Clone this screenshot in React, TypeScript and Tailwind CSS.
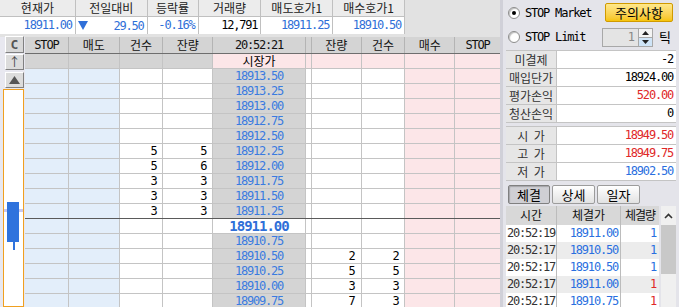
import React from 'react';

const mono = "font-['DejaVu_Sans_Mono','Noto_Sans_CJK_KR',monospace]";
const kr = "font-['Noto_Sans_CJK_KR','Noto_Sans',sans-serif]";
const num = 'tracking-[-1.2px]';

interface BookRowProps {
    price: string;
    lc?: string;
    lq?: string;
    rq?: string;
    rc?: string;
    current?: boolean;
    divider?: boolean;
}

const sellRows: BookRowProps[] = [
    { price: '18913.50' },
    { price: '18913.25' },
    { price: '18913.00' },
    { price: '18912.75' },
    { price: '18912.50' },
    { price: '18912.25', lc: '5', lq: '5' },
    { price: '18912.00', lc: '5', lq: '6' },
    { price: '18911.75', lc: '3', lq: '3' },
    { price: '18911.50', lc: '3', lq: '3' },
    { price: '18911.25', lc: '3', lq: '3', divider: true },
];

const buyRows: BookRowProps[] = [
    { price: '18911.00', current: true },
    { price: '18910.75' },
    { price: '18910.50', rq: '2', rc: '2' },
    { price: '18910.25', rq: '5', rc: '5' },
    { price: '18910.00', rq: '3', rc: '3' },
    { price: '18909.75', rq: '7', rc: '3' },
];

const trades = [
    { time: '20:52:19', price: '18911.00', qty: '1', up: false },
    { time: '20:52:17', price: '18910.50', qty: '1', up: false },
    { time: '20:52:17', price: '18910.50', qty: '1', up: false },
    { time: '20:52:17', price: '18911.00', qty: '1', up: true },
    { time: '20:52:17', price: '18910.75', qty: '1', up: true },
];

const BookRow = ({ price, lc, lq, rq, rc, current, divider }: BookRowProps) => {
    const line = divider ? 'border-b-[#5a5a5a]' : 'border-b-[#c4c4c4]';
    return (
        <div className={`flex h-[15px] shrink-0 border-b ${line} leading-[14px] ${mono} text-[12px]`}>
            <div className="w-[44px] border-r border-[#c4c4c4] bg-[#e3eefa]" />
            <div className="w-[51px] border-r border-[#c4c4c4] bg-[#e3eefa]" />
            <div className={`w-[44px] border-r border-[#c4c4c4] bg-white pr-[6px] text-right text-black ${num}`}>
                {lc}
            </div>
            <div className={`w-[50px] border-r border-[#c4c4c4] bg-white pr-[6px] text-right text-black ${num}`}>
                {lq}
            </div>
            {current ? (
                <div className="w-[93px] border-r border-[#c4c4c4] bg-white text-center text-[14px] font-bold tracking-[-1px] text-[#2f6fd8]">
                    {price}
                </div>
            ) : (
                <div className={`w-[93px] border-r border-[#c4c4c4] bg-[#d4d4d4] text-center text-[#3a7be0] ${num}`}>
                    {price}
                </div>
            )}
            <div className="w-[6px] border-r border-[#c4c4c4] bg-white" />
            <div className={`w-[50px] border-r border-[#c4c4c4] bg-white pr-[6px] text-right text-black ${num}`}>
                {rq}
            </div>
            <div className={`w-[44px] border-r border-[#c4c4c4] bg-white pr-[6px] text-right text-black ${num}`}>
                {rc}
            </div>
            <div className="w-[50px] border-r border-[#c4c4c4] bg-[#fce6e8]" />
            <div className="w-[45px] bg-[#fce6e8]" />
        </div>
    );
};

const Radio = ({ checked }: { checked?: boolean }) => (
    <span className="flex h-[12px] w-[12px] items-center justify-center rounded-full border border-[#8c8c8c] bg-white shadow-[inset_1px_1px_1px_rgba(0,0,0,0.25)]">
        {checked && <span className="h-[4px] w-[4px] rounded-full bg-black" />}
    </span>
);

const InfoRow = ({ label, value, color }: { label: string; value: string; color: string }) => (
    <div className="flex h-[18px] border-b border-[#c4c4c4]">
        <div className={`w-[51px] whitespace-pre border-r border-[#c4c4c4] bg-[#e6e6e6] text-center text-[12px] leading-[17px] text-[#333] ${kr}`}>
            {label}
        </div>
        <div className={`flex-1 bg-white pr-[3px] text-right text-[12px] leading-[17px] ${mono} ${num} ${color}`}>
            {value}
        </div>
    </div>
);

const App = () => {
    return (
        <div className={`flex h-[307px] w-[679px] overflow-hidden bg-[#e4e4ea] ${kr}`}>
            {/* left: quote + order book */}
            <div className="flex w-[503px] flex-col border-r-[3px] border-[#d0d0d8]">
                <div className="flex h-[37px] shrink-0 bg-[#e2e2e2]">
                    <div className="flex h-[34px] w-[405px] flex-col border-r border-[#c0c0c0]">
                        <div className="flex h-[17px] border-b border-[#c0c0c0] bg-[#ececec] text-center text-[12px] leading-[16px] text-[#222]">
                            <div className="w-[76px] border-r border-[#c0c0c0]">현재가</div>
                            <div className="w-[72px] border-r border-[#c0c0c0]">전일대비</div>
                            <div className="w-[51px] border-r border-[#c0c0c0]">등락률</div>
                            <div className="w-[63px] border-r border-[#c0c0c0]">거래량</div>
                            <div className="w-[72px] border-r border-[#c0c0c0]">매도호가1</div>
                            <div className="w-[71px]">매수호가1</div>
                        </div>
                        <div className={`flex h-[17px] bg-white text-right text-[12px] leading-[16px] ${mono} ${num}`}>
                            <div className="w-[76px] border-r border-[#c0c0c0] pr-[3px] text-[#2f6fd8]">18911.00</div>
                            <div className="flex w-[72px] items-center justify-between border-r border-[#c0c0c0] pr-[3px] pl-[2px] text-[#2f6fd8]">
                                <svg width="10" height="9" viewBox="0 0 10 9">
                                    <polygon points="0,0 10,0 5,9" fill="#2f6fd8" />
                                </svg>
                                <span>29.50</span>
                            </div>
                            <div className="w-[51px] border-r border-[#c0c0c0] pr-[3px] text-[#2f6fd8]">-0.16%</div>
                            <div className="w-[63px] border-r border-[#c0c0c0] pr-[3px] text-black">12,791</div>
                            <div className="w-[72px] border-r border-[#c0c0c0] pr-[3px] text-[#2f6fd8]">18911.25</div>
                            <div className="w-[71px] pr-[3px] text-[#2f6fd8]">18910.50</div>
                        </div>
                    </div>
                </div>

                <div className="flex min-h-0 flex-1">
                    {/* side strip */}
                    <div className="flex w-[25px] flex-col items-end bg-[#e8e8f0] pr-[1px]">
                        <div className={`mt-[-1px] flex h-[17px] w-[19px] items-center justify-center border border-b-[#808080] border-r-[#808080] border-l-white border-t-white bg-[#d8d8d8] text-[13px] font-bold text-[#555] ${mono}`}>
                            C
                        </div>
                        <div className="mt-[1px] flex h-[16px] w-[19px] items-center justify-center border border-b-[#808080] border-r-[#808080] border-l-white border-t-white bg-[#dcdcdc] text-[12px] text-[#444]">
                            ↑
                        </div>
                        <div className="mt-[2px] flex h-[16px] w-[19px] items-center justify-center border border-b-[#808080] border-r-[#808080] border-l-white border-t-white bg-[#dcdcdc]">
                            <svg width="11" height="8" viewBox="0 0 11 8">
                                <polygon points="5.5,0 11,8 0,8" fill="#555" />
                            </svg>
                        </div>
                        <div className="mt-[1px] w-[21px] flex-1 border border-[#f0a020] bg-white">
                            <svg width="19" height="216" viewBox="0 0 19 216">
                                <rect x="0" y="119" width="19" height="3" fill="#c8c8f0" />
                                <rect x="9" y="140" width="2" height="20" fill="#2f73dd" />
                                <rect x="3" y="112" width="12" height="40" fill="#2f73dd" />
                            </svg>
                        </div>
                    </div>

                    {/* order book */}
                    <div className="flex w-[475px] flex-col bg-white">
                        <div className={`flex h-[17px] shrink-0 border-b border-b-[#6e6e6e] bg-[#d4d4d4] text-center text-[12px] leading-[16px] text-[#111]`}>
                            <div className={`w-[44px] border-r border-[#b4b4b4] ${mono} ${num}`}>STOP</div>
                            <div className="w-[51px] border-r border-[#b4b4b4]">매도</div>
                            <div className="w-[44px] border-r border-[#b4b4b4]">건수</div>
                            <div className="w-[50px] border-r border-[#b4b4b4]">잔량</div>
                            <div className={`w-[93px] border-r border-[#b4b4b4] ${mono} ${num}`}>20:52:21</div>
                            <div className="w-[6px] border-r border-[#b4b4b4]" />
                            <div className="w-[50px] border-r border-[#b4b4b4]">잔량</div>
                            <div className="w-[44px] border-r border-[#b4b4b4]">건수</div>
                            <div className="w-[50px] border-r border-[#b4b4b4]">매수</div>
                            <div className={`w-[45px] ${mono} ${num}`}>STOP</div>
                        </div>
                        <div className="flex h-[15px] shrink-0 border-b border-[#c4c4c4] text-[12px] leading-[14px]">
                            <div className="w-[44px] border-r border-[#c4c4c4] bg-[#d4d4d4]" />
                            <div className="w-[51px] border-r border-[#c4c4c4] bg-[#d4d4d4]" />
                            <div className="w-[44px] border-r border-[#c4c4c4] bg-[#d4d4d4]" />
                            <div className="w-[50px] border-r border-[#c4c4c4] bg-[#d4d4d4]" />
                            <div className="w-[93px] border-r border-[#c4c4c4] bg-[#fce6e8] text-center text-black">시장가</div>
                            <div className="w-[6px] border-r border-[#c4c4c4] bg-[#fce6e8]" />
                            <div className="w-[50px] border-r border-[#c4c4c4] bg-[#fce6e8]" />
                            <div className="w-[44px] border-r border-[#c4c4c4] bg-[#fce6e8]" />
                            <div className="w-[50px] border-r border-[#c4c4c4] bg-[#fce6e8]" />
                            <div className="w-[45px] bg-[#fce6e8]" />
                        </div>
                        {sellRows.map((r) => (
                            <BookRow key={r.price} {...r} />
                        ))}
                        {buyRows.map((r) => (
                            <BookRow key={r.price} {...r} />
                        ))}
                    </div>
                </div>
            </div>

            {/* right panel */}
            <div className="flex w-[176px] flex-col px-[3px]">
                <div className="mt-[3px] flex h-[19px] items-center">
                    <div className="ml-[2px]">
                        <Radio checked />
                    </div>
                    <span className={`ml-[5px] text-[12px] text-black ${mono} ${num}`}>STOP Market</span>
                    <div className="ml-auto mr-[3px] flex h-[19px] w-[68px] items-center justify-center rounded-[2px] border border-[#d09a00] bg-gradient-to-b from-[#ffe88a] to-[#f6c400] text-[13px] leading-none text-black">
                        주의사항
                    </div>
                </div>
                <div className="mt-[5px] flex h-[20px] items-center">
                    <div className="ml-[2px]">
                        <Radio />
                    </div>
                    <span className={`ml-[5px] text-[12px] text-black ${mono} ${num}`}>STOP Limit</span>
                    <div className="ml-auto flex h-[19px] w-[51px] border border-[#a8a8a8]">
                        <div className={`flex-1 bg-[#e4e4e4] pr-[3px] text-right text-[12px] leading-[17px] text-[#888] ${mono}`}>1</div>
                        <div className="flex w-[14px] flex-col border-l border-[#a8a8a8]">
                            <div className="flex h-[9px] items-center justify-center border-b border-[#a8a8a8] bg-[#f4f4f4]">
                                <svg width="7" height="4" viewBox="0 0 7 4">
                                    <polygon points="3.5,0 7,4 0,4" fill="#222" />
                                </svg>
                            </div>
                            <div className="flex flex-1 items-center justify-center bg-[#cfe4f7]">
                                <svg width="7" height="4" viewBox="0 0 7 4">
                                    <polygon points="0,0 7,0 3.5,4" fill="#222" />
                                </svg>
                            </div>
                        </div>
                    </div>
                    <span className="mr-[5px] ml-[6px] text-[13px] text-black">틱</span>
                </div>

                <div className="mt-[3px] border-t border-[#c4c4c4]">
                    <InfoRow label="미결제" value="-2" color="text-black" />
                    <InfoRow label="매입단가" value="18924.00" color="text-black" />
                    <InfoRow label="평가손익" value="520.00" color="text-[#e02828]" />
                    <InfoRow label="청산손익" value="0" color="text-black" />
                </div>
                <div className="mt-[3px] border-t border-[#c4c4c4]">
                    <InfoRow label="시  가" value="18949.50" color="text-[#e02828]" />
                    <InfoRow label="고  가" value="18949.75" color="text-[#e02828]" />
                    <InfoRow label="저  가" value="18902.50" color="text-[#2a6fe0]" />
                </div>

                <div className="mt-[4px] ml-[2px] flex h-[19px] gap-[2px] text-[13px] leading-[17px] text-black">
                    <div className="w-[42px] rounded-[2px] border border-[#808080] bg-[#cfcfd4] text-center shadow-[inset_1px_1px_1px_rgba(0,0,0,0.2)]">체결</div>
                    <div className="w-[43px] rounded-[2px] border border-[#9c9c9c] bg-gradient-to-b from-white to-[#e2e2e2] text-center">상세</div>
                    <div className="w-[43px] rounded-[2px] border border-[#9c9c9c] bg-gradient-to-b from-white to-[#e2e2e2] text-center">일자</div>
                </div>

                <div className="mt-[2px] flex min-h-0 flex-1">
                    <div className="flex w-[153px] flex-col bg-white">
                        <div className="flex h-[19px] shrink-0 bg-[#d8d8d8] text-center text-[12px] leading-[18px] text-[#111]">
                            <div className="w-[51px] border-r border-[#bcbcbc]">시간</div>
                            <div className="w-[64px] border-r border-[#bcbcbc]">체결가</div>
                            <div className="w-[38px] tracking-[-1px]">체결량</div>
                        </div>
                        {trades.map((t, i) => (
                            <div
                                key={i}
                                className={`flex h-[17px] shrink-0 text-[12px] leading-[17px] ${mono} ${num} ${
                                    i % 2 === 1 ? 'bg-[#ececec]' : 'bg-white'
                                }`}
                            >
                                <div className="w-[51px] border-r border-[#bcbcbc] text-center text-[#333]">{t.time}</div>
                                <div className="w-[64px] border-r border-[#bcbcbc] pr-[2px] text-right text-[#2a6fe0]">{t.price}</div>
                                <div className={`w-[38px] pr-[3px] text-right ${t.up ? 'text-[#e02828]' : 'text-[#2a6fe0]'}`}>
                                    {t.qty}
                                </div>
                            </div>
                        ))}
                    </div>
                    <div className="ml-[2px] flex w-[17px] flex-col bg-[#f0f0f0]">
                        <div className="flex h-[19px] items-center justify-center">
                            <svg width="9" height="6" viewBox="0 0 9 6">
                                <polyline points="1,5 4.5,1.5 8,5" fill="none" stroke="#333" strokeWidth="1.6" />
                            </svg>
                        </div>
                        <div className="mx-auto h-[49px] w-[15px] bg-[#c8c8c8]" />
                    </div>
                </div>
            </div>
        </div>
    );
};

export default App;
